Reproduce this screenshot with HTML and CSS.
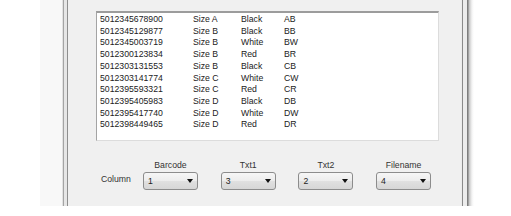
FILE: index.html
```
<!DOCTYPE html>
<html lang="en">
<head>
    <meta charset="UTF-8">
    <title>Columns</title>
    <link rel="stylesheet" href="styles.css">
</head>
<body>
    <div class="page">
        <div class="gutter"></div>
        <div class="shade"></div>
        <div class="edge-l"></div>
        <div class="panel">
            <!-- list of rows -->
            <div class="listbox">
                <div class="row"><span>5012345678900</span><span>Size A</span><span>Black</span><span>AB</span></div>
                <div class="row"><span>5012345129877</span><span>Size B</span><span>Black</span><span>BB</span></div>
                <div class="row"><span>5012345003719</span><span>Size B</span><span>White</span><span>BW</span></div>
                <div class="row"><span>5012300123834</span><span>Size B</span><span>Red</span><span>BR</span></div>
                <div class="row"><span>5012303131553</span><span>Size B</span><span>Black</span><span>CB</span></div>
                <div class="row"><span>5012303141774</span><span>Size C</span><span>White</span><span>CW</span></div>
                <div class="row"><span>5012395593321</span><span>Size C</span><span>Red</span><span>CR</span></div>
                <div class="row"><span>5012395405983</span><span>Size D</span><span>Black</span><span>DB</span></div>
                <div class="row"><span>5012395417740</span><span>Size D</span><span>White</span><span>DW</span></div>
                <div class="row"><span>5012398449465</span><span>Size D</span><span>Red</span><span>DR</span></div>
            </div>
            <!-- column pickers -->
            <div class="fields">
                <span class="col-label">Column</span>
                <div class="field">
                    <span class="field-label">Barcode</span>
                    <div class="combo"><span>1</span><i class="arrow"></i></div>
                </div>
                <div class="field">
                    <span class="field-label">Txt1</span>
                    <div class="combo"><span>3</span><i class="arrow"></i></div>
                </div>
                <div class="field">
                    <span class="field-label">Txt2</span>
                    <div class="combo"><span>2</span><i class="arrow"></i></div>
                </div>
                <div class="field">
                    <span class="field-label">Filename</span>
                    <div class="combo"><span>4</span><i class="arrow"></i></div>
                </div>
            </div>
        </div>
        <div class="edge-r"></div>
    </div>
</body>
</html>
```

FILE: styles.css
```
*{
    margin: 0;
    padding: 0;
    box-sizing: border-box;
}

body{
    background: #fff;
    font: 8.7px "Liberation Sans", Arial, sans-serif;
    color: #222;
}

.page{
    display: flex;
    height: 206px;
}

.gutter{
    width: 40px;
}

.shade{
    width: 22px;
    background: #f8f8f8;
}

.edge-l{
    width: 6px;
    background: linear-gradient(to right, #e2e2e2 0 1px, #a4a4a4 1px 2px, #e6e6e6 2px 5px, #8e8e8e 5px 6px);
}

.edge-r{
    width: 13px;
    background: linear-gradient(to right, #ececec 0 1px, #8a8a8a 1px 2px, #ececec 2px 6px, #7e7e7e 6px 7px, #c4c4c4 8px, #f4f4f4 11px, #fff 13px);
}

.panel{
    width: 393px;
    background: #f0f0f0;
    padding: 11px 0 0 28px;
}

.listbox{
    width: 343px;
    height: 130px;
    background: #fff;
    border: 1px solid #dcdcdc;
    border-top: 2px solid #9c9c9c;
    border-left: 1px solid #a4a4a4;
    padding: 1px 0 0 3px;
}

.row{
    display: grid;
    grid-template-columns: 93px 48px 43px 1fr;
    line-height: 11.7px;
    white-space: nowrap;
}

.fields{
    display: flex;
    margin: 18px 0 0 5px;
}

.col-label{
    align-self: flex-end;
    width: 42px;
    line-height: 16px;
    margin-bottom: 3px;
    color: #333;
}

.field{
    display: flex;
    flex-direction: column;
    align-items: center;
    width: 55px;
    margin-right: 22.7px;
}

.field-label{
    line-height: 12px;
    margin-bottom: 1px;
    color: #333;
}

.combo{
    display: flex;
    align-items: center;
    justify-content: space-between;
    width: 55px;
    height: 18px;
    padding: 0 4px 0 4px;
    border: 1px solid #8c8c8c;
    border-radius: 3px;
    background: linear-gradient(#f6f6f6, #ececec 50%, #e0e0e0 52%, #d6d6d6);
}

.arrow{
    width: 0;
    height: 0;
    border-left: 3.5px solid transparent;
    border-right: 3.5px solid transparent;
    border-top: 4px solid #111;
}
```
